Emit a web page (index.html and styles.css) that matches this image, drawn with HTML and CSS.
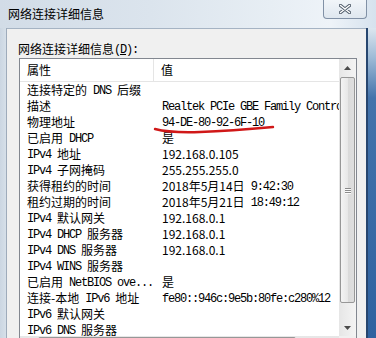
FILE: index.html
```html
<!DOCTYPE html>
<html lang="zh-CN">
<head>
    <meta charset="UTF-8">
    <title>网络连接详细信息</title>
    <link rel="stylesheet" href="styles.css">
</head>
<body>
    <div class="window">
        <div class="titlebar">
            <span class="title">网络连接详细信息</span>
            <button class="close">
                <svg width="12" height="10" viewBox="0 0 12 10">
                    <path d="M1.5 1.5 L10.5 8.5 M10.5 1.5 L1.5 8.5" stroke="#505c6a" stroke-width="3.4" stroke-linecap="round"/>
                    <path d="M1.5 1.5 L10.5 8.5 M10.5 1.5 L1.5 8.5" stroke="#ffffff" stroke-width="1.5" stroke-linecap="round"/>
                </svg>
            </button>
        </div>

        <div class="frame">
            <div class="edge-left"></div>
            <div class="client">
                <div class="caption">网络连接详细信息<span class="m">(<u>D</u>):</span></div>

                <div class="listview">
                    <div class="list-main">
                        <div class="header">
                            <div class="col-prop">属性</div>
                            <div class="col-val">值</div>
                        </div>
                        <div class="rows">
                            <div class="row"><div class="prop">连接特定的<span class="m"> DNS </span>后缀</div><div class="val"></div></div>
                            <div class="row"><div class="prop">描述</div><div class="val"><span class="m">Realtek PCIe GBE Family Controller</span></div></div>
                            <div class="row"><div class="prop">物理地址</div><div class="val"><span class="m">94-DE-80-92-6F-10</span></div></div>
                            <div class="row"><div class="prop">已启用<span class="m"> DHCP</span></div><div class="val">是</div></div>
                            <div class="row"><div class="prop"><span class="m">IPv4 </span>地址</div><div class="val">192.168.0.105</div></div>
                            <div class="row"><div class="prop"><span class="m">IPv4 </span>子网掩码</div><div class="val">255.255.255.0</div></div>
                            <div class="row"><div class="prop">获得租约的时间</div><div class="val">2018年5月14日<span class="m"> 9:42:30</span></div></div>
                            <div class="row"><div class="prop">租约过期的时间</div><div class="val">2018年5月21日<span class="m"> 18:49:12</span></div></div>
                            <div class="row"><div class="prop"><span class="m">IPv4 </span>默认网关</div><div class="val">192.168.0.1</div></div>
                            <div class="row"><div class="prop"><span class="m">IPv4 DHCP </span>服务器</div><div class="val">192.168.0.1</div></div>
                            <div class="row"><div class="prop"><span class="m">IPv4 DNS </span>服务器</div><div class="val">192.168.0.1</div></div>
                            <div class="row"><div class="prop"><span class="m">IPv4 WINS </span>服务器</div><div class="val"></div></div>
                            <div class="row"><div class="prop">已启用<span class="m"> NetBIOS ove...</span></div><div class="val">是</div></div>
                            <div class="row"><div class="prop">连接-本地<span class="m"> IPv6 </span>地址</div><div class="val"><span class="m">fe80::946c:9e5b:80fe:c280%12</span></div></div>
                            <div class="row"><div class="prop"><span class="m">IPv6 </span>默认网关</div><div class="val"></div></div>
                            <div class="row"><div class="prop"><span class="m">IPv6 DNS </span>服务器</div><div class="val"></div></div>
                        </div>
                    </div>

                    <div class="vscroll">
                        <div class="arrow">
                            <svg width="7" height="4" viewBox="0 0 7 4"><polygon points="3.5,0 7,4 0,4" fill="#4a4a4a"/></svg>
                        </div>
                        <div class="thumb">
                            <div class="grip"><span></span><span></span><span></span></div>
                        </div>
                        <div class="track"></div>
                        <div class="arrow">
                            <svg width="7" height="4" viewBox="0 0 7 4"><polygon points="0,0 7,0 3.5,4" fill="#4a4a4a"/></svg>
                        </div>
                    </div>

                    <div class="hscroll">
                        <div class="harrow"></div>
                        <div class="hthumb"></div>
                    </div>
                    <div class="corner"></div>
                </div>
            </div>
            <div class="edge-right"></div>
        </div>

        <!-- red pen mark under the MAC address -->
        <svg class="scribble" width="376" height="338" viewBox="0 0 376 338">
            <path d="M155 129 Q170 133 200 132 T273 127" fill="none" stroke="#d01818" stroke-width="2.4" stroke-linecap="round"/>
        </svg>
    </div>
</body>
</html>
```

FILE: styles.css
```css
body {
    margin: 0;
    width: 376px;
    height: 338px;
    overflow: hidden;
    font-family: "Noto Sans CJK SC", sans-serif;
    font-size: 12px;
    color: #000;
}

.window {
    position: relative;
    height: 338px;
    display: flex;
    flex-direction: column;
    background: #d8e2ec;
}

.titlebar {
    height: 28px;
    flex: none;
    display: flex;
    align-items: flex-start;
    background: linear-gradient(to right, #d2dce7 0%, #dbe4ed 40%, #e7eef4 72%, #eef3f8 88%, #d6e2ee 100%);
}

.title {
    flex: 1;
    padding-left: 8px;
    line-height: 28px;
}

.close {
    width: 44px;
    height: 19px;
    margin-right: 9px;
    padding: 0;
    border: 1px solid #8191a6;
    border-top: none;
    border-radius: 0 0 4px 4px;
    background: linear-gradient(#f1f5f9, #dfe7ef);
    display: flex;
    align-items: center;
    justify-content: center;
}

.frame {
    flex: 1;
    min-height: 0;
    display: flex;
}

.edge-left {
    width: 7px;
    background: linear-gradient(to right, #cbd6e2, #d8e1ea);
    box-shadow: inset -1px 0 #9eabbb;
}

.edge-right {
    width: 10px;
    background: linear-gradient(#dce6ef 0, #9dbad6 30px, #4373ab 70px, #2f62a0 100%);
    box-shadow: inset 2px 0 #27466f;
}

.client {
    flex: 1;
    padding: 12px 9px 0 11px;
    background: #f0f0f0;
    border-top: 1px solid #a5b3c3;
}

.caption {
    line-height: 16px;
}

/* ascii parts drawn like the old bitmap font: 6px per char */
.m {
    font-family: "Liberation Mono", monospace;
    font-size: 12px;
    letter-spacing: -1.2px;
    vertical-align: 1px;
}

.listview {
    margin-left: 1px;
    border: 1px solid #828790;
    background: #fff;
    display: grid;
    grid-template-columns: 1fr 17px;
    grid-template-rows: 277px 17px;
}

.list-main {
    min-width: 0;
    overflow: hidden;
}

.header {
    height: 23px;
    box-sizing: border-box;
    display: flex;
    border-bottom: 1px solid #e5e5e5;
    line-height: 22px;
}

.col-prop {
    width: 134px;
    box-sizing: border-box;
    padding-left: 7px;
    border-right: 1px solid #e5e5e5;
}

.col-val {
    padding-left: 7px;
}

.rows {
    height: 254px;
    overflow: hidden;
}

.row {
    display: flex;
    height: 16px;
    line-height: 16px;
    white-space: nowrap;
}

.prop {
    width: 134px;
    box-sizing: border-box;
    padding-left: 7px;
    overflow: hidden;
}

.val {
    flex: 1;
    min-width: 0;
    padding-left: 8px;
    overflow: hidden;
}

.vscroll {
    display: flex;
    flex-direction: column;
    background: linear-gradient(to right, #e6e6e6, #f4f4f4);
}

.arrow {
    height: 17px;
    flex: none;
    display: flex;
    align-items: center;
    justify-content: center;
}

.thumb {
    height: 224px;
    flex: none;
    margin: 1px 1px 0;
    border: 1px solid #979797;
    border-radius: 2px;
    background: linear-gradient(to right, #f4f4f4, #e8e8e8 50%, #dadada 51%, #dedede);
    display: flex;
    align-items: center;
    justify-content: center;
}

.grip {
    display: flex;
    flex-direction: column;
    gap: 1px;
}

.grip span {
    width: 6px;
    height: 1px;
    background: #8a8a8a;
    box-shadow: 0 1px #fafafa;
}

.track {
    flex: 1;
}

.hscroll {
    display: flex;
    background: linear-gradient(#e6e6e6, #f4f4f4);
}

.harrow {
    width: 17px;
}

.hthumb {
    width: 256px;
    margin: 1px 0 1px 1px;
    border: 1px solid #979797;
    border-radius: 2px;
    background: linear-gradient(#f4f4f4, #dedede);
}

.corner {
    background: #f0f0f0;
}

.scribble {
    position: absolute;
    left: 0;
    top: 0;
    pointer-events: none;
}
```
